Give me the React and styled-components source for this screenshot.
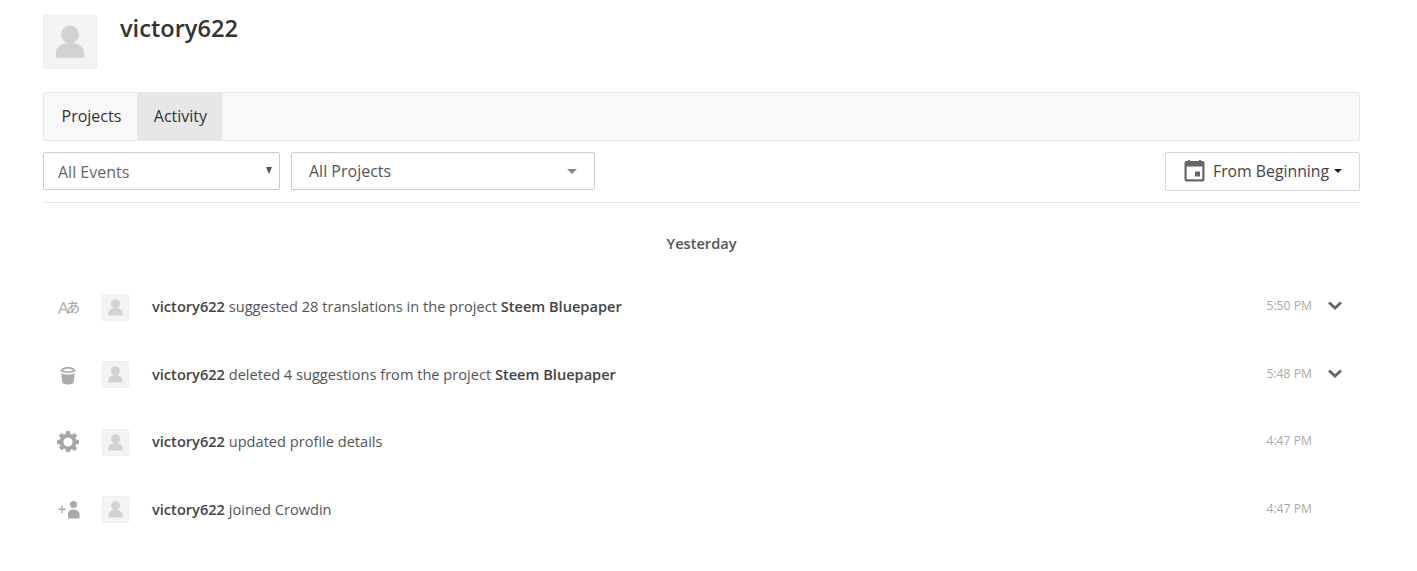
import React from "react";
import styled, { createGlobalStyle } from "styled-components";

const Global = createGlobalStyle`
  html, body { margin: 0; padding: 0; background: #fff; }
  body { font-family: "Open Sans", "Liberation Sans", sans-serif; color: #444; }
`;

const Page = styled.div`
  width: 1317px;
  margin-left: 43px;
  height: 571px;
  overflow: hidden;
`;
const Header = styled.header`
  display: flex;
  align-items: flex-start;
  gap: 23px;
  padding-top: 15px;
  height: 77px;
`;
const AvatarBox = styled.div`
  width: ${p => p.$size}px;
  height: ${p => p.$size}px;
  flex: none;
  background: #f4f4f4;
  border: 1px solid #efefef;
  box-sizing: border-box;
  border-radius: 2px;
  display: flex;
  align-items: center;
  justify-content: center;
  svg { display: block; }
`;
const Name = styled.h1`
  margin: -2px 0 0;
  font-size: 23.6px;
  line-height: 30px;
  font-weight: 600;
  color: #333;
`;
const Tabs = styled.nav`
  display: flex;
  height: 49px;
  box-sizing: border-box;
  background: #f8f8f8;
  border: 1px solid #e7e7e7;
  border-radius: 2px;
`;
const Tab = styled.div`
  display: flex;
  align-items: center;
  padding: ${p => (p.$active ? "0 15px 2px 16.5px" : "0 16px 2px 17.5px")};
  font-size: 16px;
  color: #333;
  background: ${p => (p.$active ? "#e7e7e7" : "transparent")};
`;
const Filters = styled.div`
  display: flex;
  align-items: flex-start;
  margin-top: 11px;
  height: 50px;
  border-bottom: 1px solid #e9e9e9;
`;
const SelectBox = styled.div`
  position: relative;
  width: ${p => p.$w}px;
  height: 38px;
  box-sizing: border-box;
  margin-right: 11px;
  padding-left: ${p => p.$pad}px;
  padding-top: ${p => p.$top}px;
  display: flex;
  align-items: center;
  font-size: 16px;
  color: ${p => p.$c};
  background: #fff;
  border: 1px solid #ccc;
  border-radius: 2px;
`;
const Arrow = styled.span`
  position: absolute;
  right: ${p => p.$r}px;
  top: ${p => p.$t}px;
  width: 0;
  height: 0;
  border-left: ${p => p.$hw}px solid transparent;
  border-right: ${p => p.$hw}px solid transparent;
  border-top: ${p => p.$h}px solid ${p => p.$c};
`;
const DateButton = styled.div`
  margin-left: auto;
  width: 195px;
  height: 39px;
  box-sizing: border-box;
  display: flex;
  align-items: center;
  padding: 0 0 2px 18px;
  gap: 8px;
  font-size: 15.8px;
  color: #444;
  border: 1px solid #d6d6d6;
  border-radius: 2px;
  background: #fff;
`;
const Caret = styled.span`
  width: 0;
  height: 0;
  margin-left: -3px;
  border-left: 4.5px solid transparent;
  border-right: 4.5px solid transparent;
  border-top: 4.5px solid #222;
`;
const Day = styled.div`
  margin-top: 30px;
  text-align: center;
  font-size: 14.6px;
  line-height: 20px;
  font-weight: 600;
  color: #555;
`;
const List = styled.div`
  margin-top: 20.5px;
`;
const Row = styled.div`
  display: flex;
  align-items: center;
  height: 67.5px;
`;
const TypeIcon = styled.div`
  width: 59px;
  padding-left: ${p => p.$pad}px;
  box-sizing: border-box;
  flex: none;
  display: flex;
  color: #aaa;
  svg { display: block; overflow: visible; }
`;
const Message = styled.div`
  margin: -2.4px 0 0 23px;
  flex: 1;
  font-size: 14.6px;
  color: #555;
  b { font-weight: 600; color: #444; }
`;
const Time = styled.div`
  width: 60px;
  text-align: right;
  font-size: 12.2px;
  color: #aaa;
  margin-top: -3.4px;
`;
const Toggle = styled.div`
  width: 48px;
  flex: none;
  padding-left: 16px;
  box-sizing: border-box;
  color: #666;
  margin-top: -3px;
  svg { display: block; }
`;

const Person = ({ size }) => (
  <svg width={size} height={size} viewBox="0 0 30 30" fill="#d2d2d2">
    <circle cx="15" cy="10.5" r="5.4" />
    <path d="M6.500 24.500v-3c0-3.600 3.800-6 8.500-6s8.500 2.400 8.500 6v3z" />
  </svg>
);

const Translate = () => (
  <svg width="24" height="20" viewBox="0 0 24 20">
    <text x="0" y="17" fontSize="17" fontFamily="'Open Sans', sans-serif" fill="#b0b0b0">A</text>
    <text x="8.500" y="14.500" fontSize="13.500" fontFamily="'Noto Sans CJK JP', sans-serif" fill="#a0a0a0">あ</text>
  </svg>
);
const Trash = () => (
  <svg width="18" height="20" viewBox="0 0 18 20" fill="#aaa">
    <path d="M1.500 6C2 3.500 5 2 9 2s7 1.500 7.500 4c-1.500 1.300-4.500 2-7.500 2S3 7.300 1.500 6z" />
    <path d="M4 5.300C5 4.300 7 3.800 9 3.800s4 .5 5 1.500C13 6 11 6.400 9 6.400S5 6 4 5.300z" fill="#fff" />
    <path d="M2.200 8.200C4 9.100 6.500 9.500 9 9.500s5-.4 6.800-1.300L14.600 17.500c-.3 1.300-2.700 2-5.600 2s-5.300-.7-5.600-2z" />
  </svg>
);
const Gear = () => (
  <svg width="22" height="22" viewBox="0 0 24 24" fill="#a6a6a6">
    <path fillRule="evenodd" d="M10 1h4l.6 3.200 1.800.8L19.100 3.100l2.800 2.800L20 8.600l.8 1.800L24 11v4l-3.200.6-.8 1.800 1.900 2.700-2.800 2.800-2.700-1.900-1.800.8L14 23.900h-4l-.6-3.100-1.800-.8-2.700 1.900-2.800-2.800L4 17.400l-.8-1.800L0 15v-4l3.200-.6.800-1.800-1.900-2.700 2.800-2.800L7.600 5l1.800-.8zM12 8a5 5 0 1 0 0 10 5 5 0 0 0 0-10z" transform="translate(0 -1)" />
  </svg>
);
const AddUser = () => (
  <svg width="23" height="19" viewBox="0 0 23 19" fill="#a8a8a8">
    <path d="M3.300 5.500h1.400v3h3v1.400h-3v3H3.300v-3h-3V8.500h3z" />
    <circle cx="15.500" cy="4.500" r="3.500" />
    <path d="M10 18.500v-4.500c0-2.500 2.500-4.500 5.500-4.500S21.500 11.500 21.500 14v4.500z" />
  </svg>
);
const Calendar = () => (
  <svg width="21" height="22" viewBox="0 0 21 22" fill="#666">
    <path fillRule="evenodd" d="M2.500 1h16a2 2 0 0 1 2 2v16.500a2 2 0 0 1-2 2h-16a2 2 0 0 1-2-2V3a2 2 0 0 1 2-2zM2.700 6.500v12.800h15.600V6.500z" />
    <rect x="4" y="0" width="2" height="2" />
    <rect x="15" y="0" width="2" height="2" />
    <rect x="11" y="11.500" width="5" height="5" />
  </svg>
);
const Chevron = () => (
  <svg width="14" height="9" viewBox="0 0 14 9" fill="none" stroke="#666" strokeWidth="2.800">
    <path d="M1 1.500l6 5.500 6-5.500" />
  </svg>
);

const events = [
  { icon: <Translate />, pad: 15, text: <> suggested 28 translations in the project <b>Steem Bluepaper</b></>, time: "5:50 PM", more: true },
  { icon: <Trash />, pad: 16, text: <> deleted 4 suggestions from the project <b>Steem Bluepaper</b></>, time: "5:48 PM", more: true },
  { icon: <Gear />, pad: 14, text: <> updated profile details</>, time: "4:47 PM" },
  { icon: <AddUser />, pad: 15, text: <> joined Crowdin</>, time: "4:47 PM" },
];

export default function App() {
  return (
    <Page>
      <Global />
      <Header>
        <AvatarBox $size={54}><Person size={50} /></AvatarBox>
        <Name>victory622</Name>
      </Header>
      <Tabs>
        <Tab>Projects</Tab>
        <Tab $active>Activity</Tab>
      </Tabs>
      <Filters>
        <SelectBox $w={237} $pad={14} $top={2} $c="#666">
          All Events
          <Arrow $r={7} $t={14} $hw={3.5} $h={7} $c="#555" />
        </SelectBox>
        <SelectBox $w={304} $pad={17} $top={0} $c="#555">
          All Projects
          <Arrow $r={17} $t={16} $hw={5} $h={5} $c="#888" />
        </SelectBox>
        <DateButton>
          <Calendar />
          From Beginning
          <Caret />
        </DateButton>
      </Filters>
      <Day>Yesterday</Day>
      <List>
        {events.map((e, i) => (
          <Row key={i}>
            <TypeIcon $pad={e.pad}>{e.icon}</TypeIcon>
            <AvatarBox $size={27}><Person size={25} /></AvatarBox>
            <Message><b>victory622</b>{e.text}</Message>
            <Time>{e.time}</Time>
            <Toggle>{e.more && <Chevron />}</Toggle>
          </Row>
        ))}
      </List>
    </Page>
  );
}
